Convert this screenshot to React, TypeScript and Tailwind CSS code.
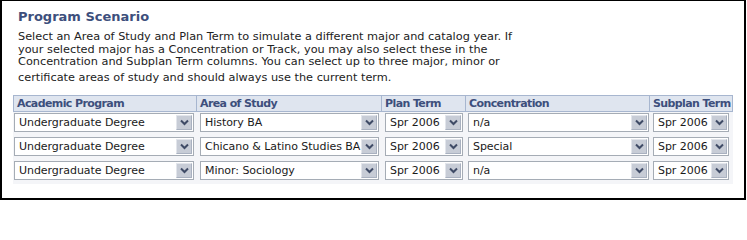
import React from 'react';

const COLS = [
    { label: 'Academic Program', sel: 'w-[180px]', pad: 'pl-[1px]' },
    { label: 'Area of Study', sel: 'w-[179px]', pad: 'pl-[3px]' },
    { label: 'Plan Term', sel: 'w-[78px]', pad: 'pl-[3px]' },
    { label: 'Concentration', sel: 'w-[181px]', pad: 'pl-[2px]' },
    { label: 'Subplan Term', sel: 'w-[76px]', pad: 'pl-[3px]' },
];

const ROWS = [
    ['Undergraduate Degree', 'History BA', 'Spr 2006', 'n/a', 'Spr 2006'],
    ['Undergraduate Degree', 'Chicano & Latino Studies BA', 'Spr 2006', 'Special', 'Spr 2006'],
    ['Undergraduate Degree', 'Minor: Sociology', 'Spr 2006', 'n/a', 'Spr 2006'],
];

const Chevron = () => (
    <svg width="9" height="7" viewBox="0 0 9 7" className="block">
        <path d="M1 1.5 L4.5 5 L8 1.5" fill="none" stroke="#3f4b66" strokeWidth="2" />
    </svg>
);

const FakeSelect = ({ value, width }: { value: string; width: string }) => (
    <div className={`${width} h-[19px] flex items-stretch border border-[#a5acb5] bg-white`}>
        <span className="flex-1 min-w-0 overflow-hidden whitespace-nowrap pl-[4px] leading-[17px] text-[11px] tracking-[-0.05px] text-[#1a1a1a]">
            {value}
        </span>
        <span className="w-[16px] shrink-0 m-[1px] ml-0 flex items-center justify-center bg-[#c7ccd6] border border-[#e2e5eb] border-r-[#a9b1c0] border-b-[#a9b1c0]">
            <Chevron />
        </span>
    </div>
);

export default function App() {
    return (
        <div className="w-[747px] h-[200px] bg-white font-['DejaVu_Sans',Verdana,sans-serif]">
            <div className="w-[746px] h-[200px] border-t border-l-2 border-r-2 border-b-2 border-black pl-[11px] pt-[8px]">
                {/* Title */}
                <h2 className="pl-[5px] text-[13px] leading-[16px] font-bold text-[#3d4f7c]">Program Scenario</h2>

                {/* Description */}
                <div className="pl-[5px] mt-[6px] text-[11.3px] leading-[12.5px] text-[#222] whitespace-nowrap">
                    <p>
                        Select an Area of Study and Plan Term to simulate a different major and catalog year. If<br />
                        your selected major has a Concentration or Track, you may also select these in the<br />
                        Concentration and Subplan Term columns. You can select up to three major, minor or
                    </p>
                    <p className="mt-[3.5px]">certificate areas of study and should always use the current term.</p>
                </div>

                {/* Grid */}
                <div className="mt-[10px] w-[720px] grid grid-cols-[184px_185px_84px_184px_83px]">
                    {COLS.map((c, j) => (
                        <div key={c.label}
                            className={`h-[17px] pl-[3px] overflow-hidden whitespace-nowrap text-[11px] tracking-[-0.6px] font-bold leading-[15px] text-[#3d4f7c] bg-[#dfe5ef] border-y border-r border-[#a7b6cf] ${j === 0 ? 'border-l' : ''}`}>
                            {c.label}
                        </div>
                    ))}
                    {ROWS.map((r, i) =>
                        r.map((v, j) => (
                            <div key={`${i}-${j}`} className={`h-[24px] pt-[1px] bg-[#f4f5f8] ${COLS[j].pad}`}>
                                <FakeSelect value={v} width={COLS[j].sel} />
                            </div>
                        ))
                    )}
                </div>
            </div>
        </div>
    );
}
